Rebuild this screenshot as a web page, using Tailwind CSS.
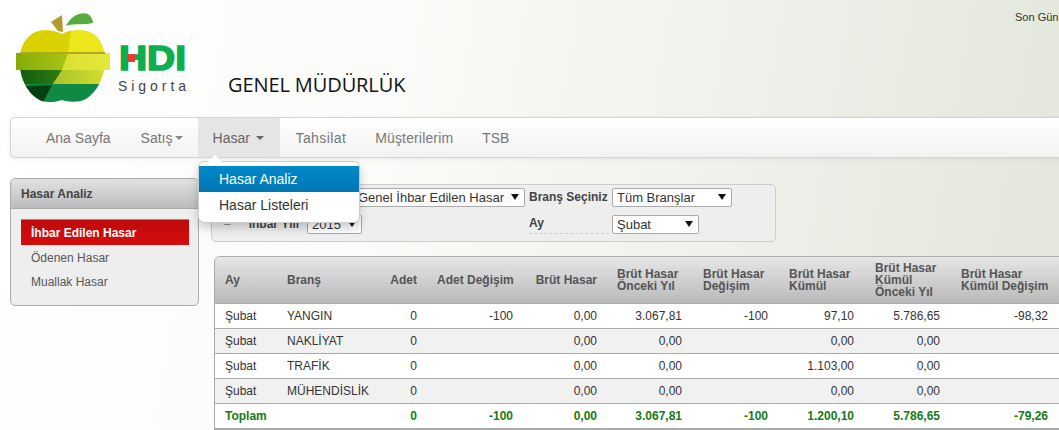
<!DOCTYPE html>
<html lang="tr">
<head>
    <meta charset="UTF-8">
    <title>HDI Sigorta - Hasar Analiz</title>
    <script src="https://cdn.jsdelivr.net/npm/@tailwindcss/browser@4"></script>
</head>
<body class="m-0 overflow-hidden font-['Liberation_Sans',Arial,sans-serif] text-xs text-[#333]">
<div class="w-[1059px] h-[430px] overflow-hidden bg-[linear-gradient(100deg,#ffffff_0%,#fbfbf9_35%,#e2e6da_100%)]">

    <!-- header -->
    <header class="relative h-[117px] flex">
        <svg width="200" height="117" viewBox="0 0 200 117" class="shrink-0">
            <defs>
                <clipPath id="apple">
                    <path d="M62 34 C54 30 40 28 32 34 C22 41 19 52 20 66 C21 82 30 96 42 101 C50 103 56 102 62 100 C68 102 78 103 86 99 C97 92 104 78 105 62 C105 48 101 38 92 33 C82 28 70 30 62 34 Z"/>
                </clipPath>
                <linearGradient id="b1" x1="0" x2="1"><stop offset="0" stop-color="#86ab08"/><stop offset="1" stop-color="#a8c412"/></linearGradient>
                <linearGradient id="b1r" x1="0" x2="1"><stop offset="0" stop-color="#cfd92a"/><stop offset="1" stop-color="#e6e83c"/></linearGradient>
                <linearGradient id="b2" x1="0" x2="1"><stop offset="0" stop-color="#0a5610"/><stop offset="1" stop-color="#2f7d12"/></linearGradient>
                <linearGradient id="b2r" x1="0" x2="1"><stop offset="0" stop-color="#7fae2c"/><stop offset="1" stop-color="#dcdf2c"/></linearGradient>
            </defs>
            <!-- stem and leaf -->
            <path d="M51 22 L62 15 L63 32 L58 31 Z" fill="#b59a2c"/>
            <path d="M66 26 C70 17 80 11 88 14 C91 16 93 20 93 23 C86 25 74 23 66 26 Z" fill="#56ac3e"/>
            <g clip-path="url(#apple)">
                <rect x="10" y="25" width="100" height="28" fill="#ebe71b"/>
                <path d="M10 25 H72 L68 53 H10 Z" fill="#d9d200"/>
                <rect x="10" y="70" width="100" height="15" fill="url(#b2r)"/>
                <path d="M10 70 H62 L52 85 H10 Z" fill="url(#b2)"/>
                <rect x="10" y="84" width="100" height="20" fill="#0e8a45"/>
                <path d="M10 84 L28 86 L52 85 L42 104 L10 104 Z" fill="#063f10"/>
            </g>
            <rect x="16" y="53" width="94" height="17" fill="url(#b1r)"/>
            <path d="M16 53 H68 L62 70 H16 Z" fill="url(#b1)"/>
            <rect x="20" y="52" width="85" height="2" fill="#b0a820"/>
            <text x="119" y="70" font-family="Liberation Sans" font-weight="700" font-size="35" fill="#0cae50" stroke="#0cae50" stroke-width="1.6" textLength="67" lengthAdjust="spacingAndGlyphs">HDI</text>
            <rect x="127" y="54" width="8" height="8" fill="#ee3a32"/>
            <text x="118" y="91" font-family="Liberation Sans" font-size="14" fill="#444" textLength="68">Sigorta</text>
        </svg>
        <h1 class="ml-[28px] mt-[73px] font-['Open_Sans',sans-serif] text-[20px] leading-6 font-normal text-[#111] h-6 whitespace-nowrap tracking-[-0.1px]">GENEL MÜDÜRLÜK</h1>
        <span class="absolute left-[1015px] top-[11px] text-[11px] leading-3 whitespace-nowrap">Son Gün</span>
    </header>

    <!-- nav -->
    <nav class="relative ml-[10px] w-[1100px] h-[41px] flex items-stretch pl-[20px] rounded border border-[#d4d4d4] bg-linear-to-b from-white to-[#f2f2f2] text-sm text-[#777] shadow-[0_1px_4px_rgba(0,0,0,0.07)]">
        <a class="flex items-center px-[15px]">Ana Sayfa</a>
        <a class="flex items-center pl-[15px] pr-[15px] gap-[2px]">Satış<span class="w-0 h-0 border-x-4 border-x-transparent border-t-4 border-t-[#888] mt-px"></span></a>
        <a class="flex items-center w-[82px] pl-[15px] gap-[6px] bg-[#e5e5e5] text-[#666]">Hasar<span class="w-0 h-0 border-x-4 border-x-transparent border-t-4 border-t-[#666] mt-px"></span></a>
        <a class="flex items-center pl-[16px] pr-[15px] tracking-[0.4px]">Tahsilat</a>
        <a class="flex items-center px-[14px] tracking-[0.15px]">Müşterilerim</a>
        <a class="flex items-center px-[15px]">TSB</a>

        <!-- open dropdown -->
        <div class="absolute left-[187px] top-[43px] z-10 w-[162px] h-[62px] pt-[4px] rounded-md bg-white border border-black/20 shadow-[0_5px_10px_rgba(0,0,0,0.2)] text-sm text-[#333]">
            <span class="absolute -top-[7px] left-[9px] w-0 h-0 border-x-[7px] border-x-transparent border-b-[7px] border-b-white"></span>
            <a class="flex items-center h-[26px] pl-5 text-white bg-linear-to-b from-[#08c] to-[#0077b3]">Hasar Analiz</a>
            <a class="flex items-center h-[26px] pl-5">Hasar Listeleri</a>
        </div>
    </nav>

    <main class="flex pl-[10px]">
        <!-- left menu -->
        <aside class="w-[189px] h-[128px] mt-[20px] shrink-0 rounded-[5px] border border-[#aaa] bg-[#eee] overflow-hidden">
            <div class="h-[30px] flex items-center pl-[10px] border-b border-[#aaa] bg-linear-to-b from-[#e2e2e2] to-[#bcbcbc] font-bold text-[#444]">Hasar Analiz</div>
            <ul class="pt-[10px] pl-[10px] pr-[9px]">
                <li class="h-[26px] flex items-center pl-[10px] border-t border-t-[#e66] bg-linear-to-b from-[#bd0b0b] to-[#d60c0c] font-bold text-white">İhbar Edilen Hasar</li>
                <li class="h-[25px] flex items-center pl-[10px] text-[#555]">Ödenen Hasar</li>
                <li class="h-[24px] flex items-center pl-[10px] text-[#555]">Muallak Hasar</li>
            </ul>
        </aside>

        <section class="ml-[12px] grow min-w-0">
            <!-- filters -->
            <div class="w-[565px] h-[58px] mt-[26px] rounded-[5px] border border-[#ccc] bg-[#eee] grid grid-cols-[95px_218px_87px_1fr] grid-rows-[27px_27px] pt-[3px] text-xs">
                <span></span>
                <div class="relative justify-self-end w-[172px] h-[19px] bg-white border border-[#aaa] rounded-[2px] text-[13px] leading-[17px] pl-[4px] whitespace-nowrap">Genel İhbar Edilen Hasar<svg width="8" height="6" viewBox="0 0 8 6" class="absolute right-[5px] top-[5px]"><path d="M0 0H8L4 6Z" fill="#111"/></svg></div>
                <span class="ml-[4px] font-bold text-[#444] leading-[19px] whitespace-nowrap">Branş Seçiniz</span>
                <div class="relative w-[120px] h-[19px] bg-white border border-[#aaa] rounded-[2px] text-[13px] leading-[17px] pl-[4px]">Tüm Branşlar<svg width="8" height="6" viewBox="0 0 8 6" class="absolute right-[5px] top-[5px]"><path d="M0 0H8L4 6Z" fill="#111"/></svg></div>

                <span class="pl-[12px] font-bold text-[#444] leading-[19px] whitespace-nowrap"><span class="font-normal text-[#888] mr-[18px]">–</span>İhbar Yılı</span>
                <div class="relative w-[55px] h-[19px] bg-white border border-[#aaa] rounded-[2px] text-[13px] leading-[17px] pl-[4px]">2015<svg width="8" height="6" viewBox="0 0 8 6" class="absolute right-[5px] top-[5px]"><path d="M0 0H8L4 6Z" fill="#111"/></svg></div>
                <span class="ml-[4px] w-[80px] h-[19px] font-bold text-[#444] leading-[17px] border-b border-dashed border-[#ccc]">Ay</span>
                <div class="relative w-[87px] h-[19px] bg-white border border-[#aaa] rounded-[2px] text-[13px] leading-[17px] pl-[4px]">Şubat<svg width="8" height="6" viewBox="0 0 8 6" class="absolute right-[5px] top-[5px]"><path d="M0 0H8L4 6Z" fill="#111"/></svg></div>
            </div>

            <!-- results -->
            <div class="ml-[3px] mt-[14px] w-[860px] rounded-t-[6px] border border-[#aaa] border-b-2 overflow-hidden">
                <table class="table-fixed w-[858px] border-collapse text-xs">
                    <colgroup>
                        <col class="w-[62px]"><col class="w-[102px]"><col class="w-[48px]"><col class="w-[96px]"><col class="w-[84px]">
                        <col class="w-[86px]"><col class="w-[86px]"><col class="w-[86px]"><col class="w-[86px]"><col class="w-[122px]">
                    </colgroup>
                    <thead class="bg-linear-to-b from-[#e6e6e6] to-[#bababa] text-[#555] leading-3">
                        <tr class="h-[46px] border-b border-[#aaa]">
                            <th class="px-[10px] text-left">Ay</th>
                            <th class="px-[10px] text-left">Branş</th>
                            <th class="px-[10px] text-right">Adet</th>
                            <th class="px-[10px] text-right whitespace-nowrap">Adet Değişim</th>
                            <th class="px-[10px] text-right whitespace-nowrap">Brüt Hasar</th>
                            <th class="px-[10px] text-left">Brüt Hasar Önceki Yıl</th>
                            <th class="px-[10px] text-left">Brüt Hasar Değişim</th>
                            <th class="px-[10px] text-left">Brüt Hasar Kümül</th>
                            <th class="px-[10px] text-left">Brüt Hasar Kümül Önceki Yıl</th>
                            <th class="px-[10px] text-left">Brüt Hasar<br>Kümül Değişim</th>
                        </tr>
                    </thead>
                    <tbody class="text-right">
                        <tr class="h-[25px] bg-white border-b border-[#aaa]">
                            <td class="px-[10px] text-left">Şubat</td><td class="px-[10px] text-left">YANGIN</td><td class="px-[10px]">0</td><td class="px-[10px]">-100</td><td class="px-[10px]">0,00</td><td class="pr-[11px]">3.067,81</td><td class="pr-[11px]">-100</td><td class="pr-[11px]">97,10</td><td class="pr-[11px]">5.786,65</td><td class="pr-[25px]">-98,32</td>
                        </tr>
                        <tr class="h-[25px] bg-[#f1f1f1] border-b border-[#aaa]">
                            <td class="px-[10px] text-left">Şubat</td><td class="px-[10px] text-left">NAKLİYAT</td><td class="px-[10px]">0</td><td class="px-[10px]"></td><td class="px-[10px]">0,00</td><td class="pr-[11px]">0,00</td><td class="pr-[11px]"></td><td class="pr-[11px]">0,00</td><td class="pr-[11px]">0,00</td><td class="pr-[25px]"></td>
                        </tr>
                        <tr class="h-[25px] bg-white border-b border-[#aaa]">
                            <td class="px-[10px] text-left">Şubat</td><td class="px-[10px] text-left">TRAFİK</td><td class="px-[10px]">0</td><td class="px-[10px]"></td><td class="px-[10px]">0,00</td><td class="pr-[11px]">0,00</td><td class="pr-[11px]"></td><td class="pr-[11px]">1.103,00</td><td class="pr-[11px]">0,00</td><td class="pr-[25px]"></td>
                        </tr>
                        <tr class="h-[25px] bg-[#f1f1f1] border-b border-[#aaa]">
                            <td class="px-[10px] text-left">Şubat</td><td class="px-[10px] text-left">MÜHENDİSLİK</td><td class="px-[10px]">0</td><td class="px-[10px]"></td><td class="px-[10px]">0,00</td><td class="pr-[11px]">0,00</td><td class="pr-[11px]"></td><td class="pr-[11px]">0,00</td><td class="pr-[11px]">0,00</td><td class="pr-[25px]"></td>
                        </tr>
                        <tr class="h-[25px] bg-white font-bold text-[#157a15]">
                            <td class="px-[10px] text-left">Toplam</td><td class="px-[10px]"></td><td class="px-[10px]">0</td><td class="px-[10px]">-100</td><td class="px-[10px]">0,00</td><td class="pr-[11px]">3.067,81</td><td class="pr-[11px]">-100</td><td class="pr-[11px]">1.200,10</td><td class="pr-[11px]">5.786,65</td><td class="pr-[25px]">-79,26</td>
                        </tr>
                    </tbody>
                </table>
            </div>
        </section>
    </main>
</div>
</body>
</html>
